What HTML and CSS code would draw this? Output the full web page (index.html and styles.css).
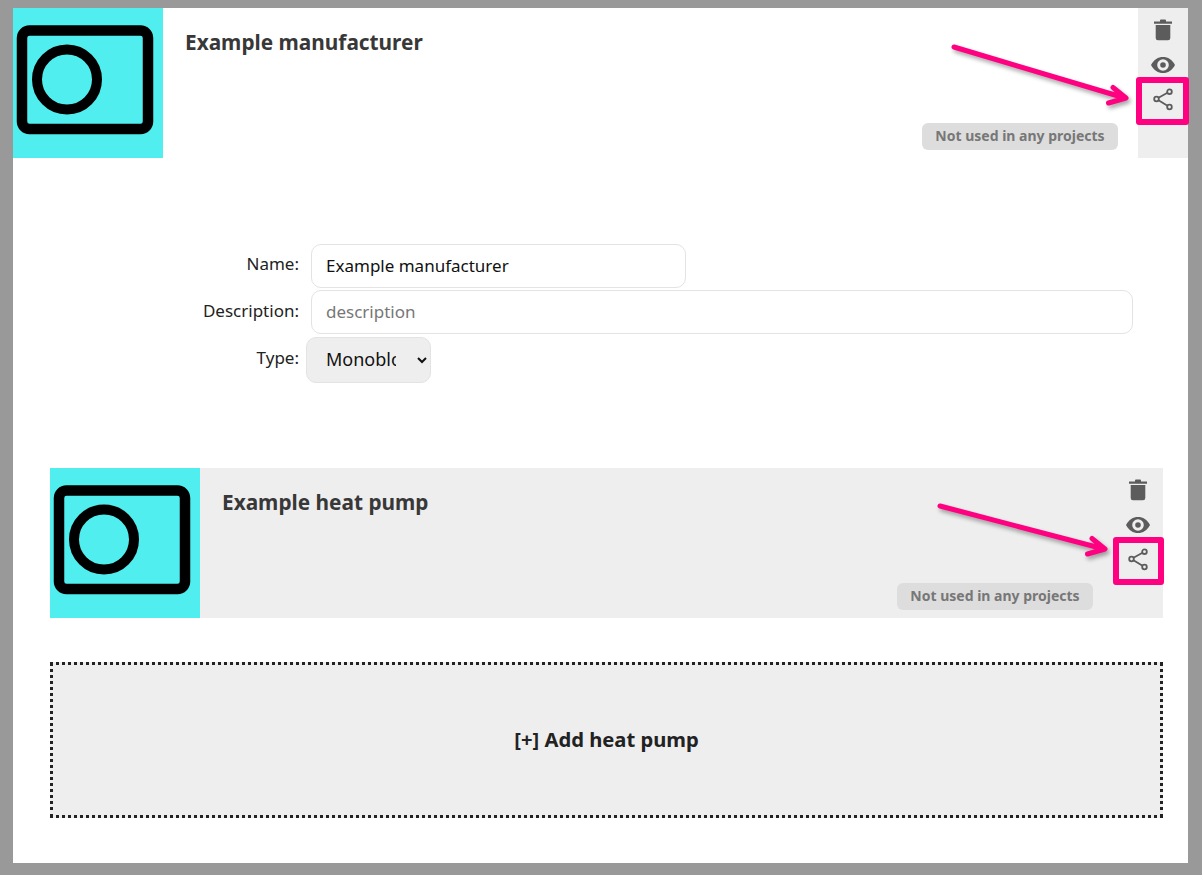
FILE: index.html
```html
<!DOCTYPE html>
<html lang="en">
<head>
<meta charset="utf-8">
<title>Example manufacturer</title>
<link rel="stylesheet" href="styles.css">
</head>
<body>
<main class="panel">
  <section class="card">
    <svg class="thumb" viewBox="0 0 150 150" aria-hidden="true"><rect width="150" height="150" fill="#50eeee"/><rect x="9" y="22.500" width="126" height="98.500" rx="7.500" fill="none" stroke="#000" stroke-width="10.500"/><circle cx="54" cy="71.500" r="30" fill="none" stroke="#000" stroke-width="10"/></svg>
    <div class="card-body">
      <h2 class="card-title">Example manufacturer</h2>
      <span class="badge">Not used in any projects</span>
    </div>
    <div class="card-side card-side-grey">
      <svg class="icon" viewBox="0 0 24 24"><path d="M3 3.500h6V2.500a1 1 0 0 1 1-1h4a1 1 0 0 1 1 1v1h6v2.200H3z M4.700 7h14.600v13a2.300 2.300 0 0 1-2.300 2.300H7a2.300 2.300 0 0 1-2.300-2.300z"/></svg>
      <svg class="icon" viewBox="0 0 24 24"><path fill-rule="evenodd" d="M0 12C3 6.500 7 4 12 4s9 2.500 12 8c-3 5.500-7 8-12 8S3 17.500 0 12zm12 5.800a5.800 5.800 0 1 0 0-11.600 5.800 5.800 0 0 0 0 11.600zm0-3a2.800 2.800 0 1 1 0-5.600 2.800 2.800 0 0 1 0 5.600z"/></svg>
      <svg class="icon icon-share" viewBox="0 0 24 24"><path d="M7.500 9.800 16.500 4.800M7.500 12.200l9 5.600"/><circle cx="5.500" cy="11" r="2.300"/><circle cx="18.500" cy="3.700" r="2.300"/><circle cx="18.500" cy="19" r="2.300"/></svg>
    </div>
    <span class="frame frame-top"></span>
  </section>

  <form class="form">
    <label class="form-label" for="name">Name:</label>
    <input class="field field-short" id="name" type="text" value="Example manufacturer">
    <label class="form-label" for="description">Description:</label>
    <input class="field" id="description" type="text" placeholder="description">
    <label class="form-label" for="type">Type:</label>
    <select class="select" id="type"><option>Monobloc</option><option>Split</option></select>
  </form>

  <div class="children">
    <section class="card card-grey">
      <svg class="thumb" viewBox="0 0 150 150" aria-hidden="true"><rect width="150" height="150" fill="#50eeee"/><rect x="9" y="22.500" width="126" height="98.500" rx="7.500" fill="none" stroke="#000" stroke-width="10.500"/><circle cx="54" cy="71.500" r="30" fill="none" stroke="#000" stroke-width="10"/></svg>
      <div class="card-body">
        <h2 class="card-title">Example heat pump</h2>
        <span class="badge">Not used in any projects</span>
      </div>
      <div class="card-side">
        <svg class="icon" viewBox="0 0 24 24"><path d="M3 3.500h6V2.500a1 1 0 0 1 1-1h4a1 1 0 0 1 1 1v1h6v2.200H3z M4.700 7h14.600v13a2.300 2.300 0 0 1-2.300 2.300H7a2.300 2.300 0 0 1-2.300-2.300z"/></svg>
        <svg class="icon" viewBox="0 0 24 24"><path fill-rule="evenodd" d="M0 12C3 6.500 7 4 12 4s9 2.500 12 8c-3 5.500-7 8-12 8S3 17.500 0 12zm12 5.800a5.800 5.800 0 1 0 0-11.600 5.800 5.800 0 0 0 0 11.600zm0-3a2.800 2.800 0 1 1 0-5.600 2.800 2.800 0 0 1 0 5.600z"/></svg>
        <svg class="icon icon-share" viewBox="0 0 24 24"><path d="M7.500 9.800 16.500 4.800M7.500 12.200l9 5.600"/><circle cx="5.500" cy="11" r="2.300"/><circle cx="18.500" cy="3.700" r="2.300"/><circle cx="18.500" cy="19" r="2.300"/></svg>
      </div>
      <span class="frame frame-child"></span>
    </section>
    <button class="add" type="button">[+] Add heat pump</button>
  </div>

  <svg class="arrows" viewBox="0 0 1202 875" aria-hidden="true">
    <path d="M954 47 1125 98M1113 87.500 1126 98 1108.500 103"/>
    <path d="M940 506 1104 549M1092 538.500 1105 549 1087.500 554"/>
  </svg>
</main>
</body>
</html>
```
FILE: styles.css
```css
* { box-sizing: border-box; }
html, body { height: 100%; }
body {
  margin: 0;
  padding: 8px 14px 12px 13px;
  background: #999;
  font-family: "Noto Sans", "Open Sans", sans-serif;
  color: #333;
}
.panel {
  height: 855px;
  background: #fff;
}
.card {
  position: relative;
  display: flex;
  height: 150px;
}
.card-grey { background: #eee; }
.thumb {
  flex: none;
  display: block;
  width: 150px;
  height: 150px;
}
.card-body {
  flex: 1;
  display: flex;
  flex-direction: column;
  justify-content: space-between;
  align-items: flex-start;
  padding: 22px 20px 8px 22px;
}
.card-title {
  margin: 0;
  font-size: 20.800px;
  line-height: 25px;
  font-weight: 700;
  color: #383838;
}
.badge {
  align-self: flex-end;
  width: 196px;
  height: 27px;
  border-radius: 6px;
  background: #ddd;
  color: #777;
  font-size: 14px;
  font-weight: 700;
  line-height: 25px;
  text-align: center;
  white-space: nowrap;
}
.card-side {
  flex: none;
  width: 50px;
  padding-top: 10px;
  display: flex;
  flex-direction: column;
  align-items: center;
}
.card-side-grey { background: #eee; }
.icon {
  display: block;
  flex: none;
  width: 24px;
  height: 24px;
  margin-bottom: 11px;
  fill: #5c5c5c;
}
.icon-share {
  fill: none;
  stroke: #5c5c5c;
  stroke-width: 1.800;
}
.frame {
  position: absolute;
  border: 6px solid #ff0080;
  border-radius: 3px;
  width: 53px;
  height: 48px;
}
.frame-top { top: 69px; right: -1px; }
.frame-child { top: 69px; right: -1px; width: 51px; }
.form {
  display: grid;
  grid-template-columns: 286px 375px 447px;
  grid-template-rows: 46px 47px 46px;
  align-items: start;
  margin-top: 86px;
}
.form-label {
  grid-column: 1;
  font-size: 17px;
  line-height: 24px;
  padding-top: 9px;
  text-align: right;
  color: #222;
}
.form-label:first-child { padding-top: 8px; }
.field {
  grid-column: 2 / 4;
  margin-left: 12px;
  height: 44px;
  width: 822px;
  padding: 0 14px 2px;
  border: 1px solid #e3e3e3;
  border-radius: 10px;
  font: 17px "Noto Sans", sans-serif;
  color: #111;
  background: #fff;
}
.field-short { width: 375px; }
.field::placeholder { color: #777; opacity: 1; }
.select {
  grid-column: 2;
  margin: 0 0 0 7px;
  width: 125px;
  height: 46px;
  padding: 0 18px 2px 15px;
  border: 1px solid #e3e3e3;
  border-radius: 10px;
  background: #eee;
  font: 18px "Noto Sans", sans-serif;
  color: #111;
}
.children {
  margin-top: 85px;
  margin-right: 25px;
  margin-left: 37px;
}
.add {
  display: block;
  width: 100%;
  height: 156px;
  margin-top: 44px;
  padding: 0 0 2px;
  border: 3px dotted #222;
  background: #eee;
  font: 700 20.200px "Noto Sans", sans-serif;
  color: #222;
}
.arrows {
  position: absolute;
  left: 0;
  top: 0;
  width: 1202px;
  height: 875px;
  pointer-events: none;
  filter: drop-shadow(2px 3px 2px rgba(0, 0, 0, 0.35));
}
.arrows path {
  fill: none;
  stroke: #ff0080;
  stroke-width: 5;
  stroke-linecap: round;
  stroke-linejoin: round;
}
```
